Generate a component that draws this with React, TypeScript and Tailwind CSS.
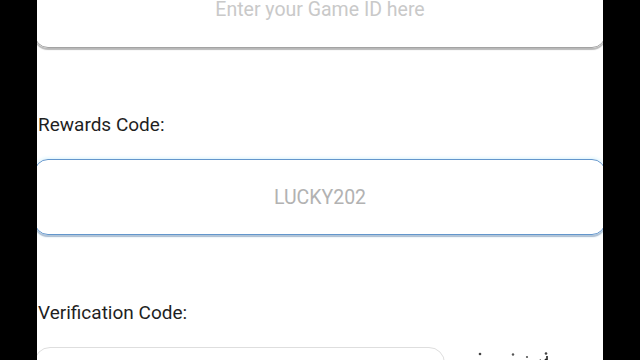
import React from 'react';

const Captcha: React.FC = () => (
    <svg width="120" height="20" viewBox="0 0 120 20" className="mt-[3px]">
        <circle cx="35" cy="4" r="1.3" fill="#444" />
        <circle cx="68" cy="4.5" r="1.2" fill="#555" />
        <circle cx="82" cy="7" r="1.1" fill="#555" />
        <circle cx="101" cy="3.5" r="1.3" fill="#444" />
        <path d="M90 13 L96 10 M95 10 L99 14 M100 9 L104 13 M102 6 L102 14" stroke="#222" strokeWidth="1.6" fill="none" />
    </svg>
);

const App: React.FC = () => {
    return (
        <div className="w-[640px] h-[360px] bg-black flex justify-center overflow-hidden" style={{ fontFamily: 'Roboto, "Liberation Sans", sans-serif' }}>
            <div className="w-[566px] h-full bg-white overflow-hidden flex flex-col">
                <div className="-mt-[28px] -mx-[3px] h-[76px] shrink-0 rounded-[14px] border-[1.5px] border-[#a3a3a3] shadow-[0_2px_1px_rgba(0,0,0,0.28)] flex items-center justify-center">
                    <span className="text-[19.5px] leading-[20px] text-[#c9c9c9]">Enter your Game ID here</span>
                </div>

                <div className="mt-[65px] h-[24px] leading-[24px] text-[19px] text-[#1f1f1f] pl-[1px]">Rewards Code:</div>

                <div className="mt-[22px] -mx-[3px] h-[76px] shrink-0 rounded-[14px] border-[1.5px] border-[#6396cc] shadow-[0_0_4px_#c4ecfb,0_2px_1px_rgba(50,70,120,0.45)] flex items-center justify-center">
                    <span className="text-[19.5px] leading-[20px] text-[#b2b2b2] mt-[1px]">LUCKY202</span>
                </div>

                <div className="mt-[66px] h-[24px] leading-[24px] text-[19px] text-[#1f1f1f] pl-[1px]">Verification Code:</div>

                <div className="mt-[22px] flex items-start">
                    <div className="-ml-[3px] w-[411px] h-[60px] shrink-0 rounded-[16px] border-[1.5px] border-[#dedede]" />
                    <Captcha />
                </div>
            </div>
        </div>
    );
};

export default App;
